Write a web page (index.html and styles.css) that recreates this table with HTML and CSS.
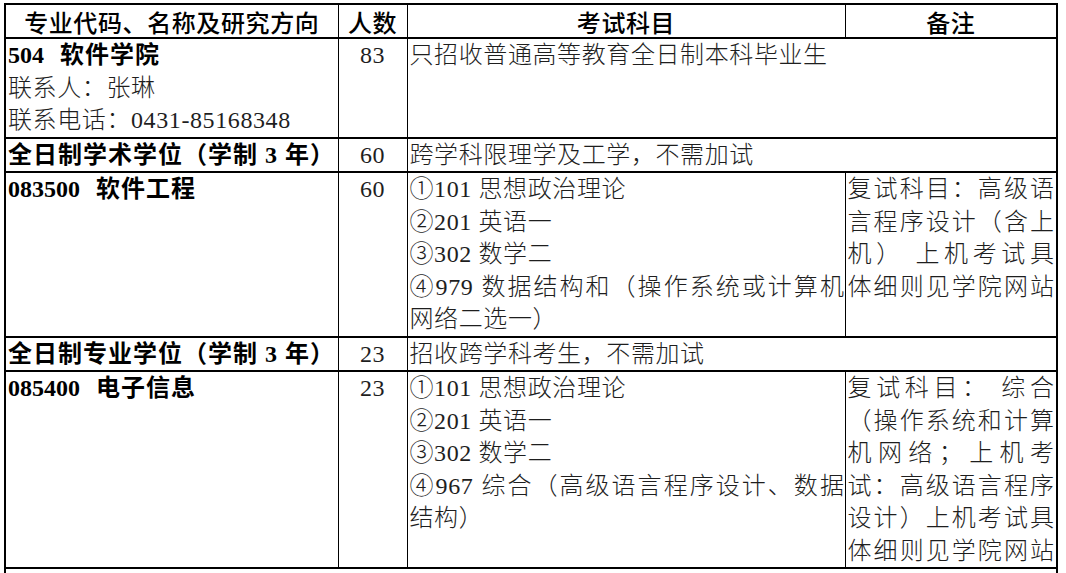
FILE: index.html
```html
<!DOCTYPE html>
<html lang="zh-CN">
<head>
<meta charset="utf-8">
<title>招生专业目录</title>
<link rel="stylesheet" href="styles.css">
</head>
<body>
<table class="catalog">
  <colgroup>
    <col class="c-major">
    <col class="c-num">
    <col class="c-exam">
    <col class="c-note">
  </colgroup>
  <thead>
    <tr class="head">
      <th>专业代码、名称及研究方向</th>
      <th>人数</th>
      <th>考试科目</th>
      <th>备注</th>
    </tr>
  </thead>
  <tbody>
    <tr>
      <td class="major">
        <div class="strong"><span class="code">504</span> 软件学院</div>
        <div>联系人：张琳</div>
        <div>联系电话：0431-85168348</div>
      </td>
      <td class="num">83</td>
      <td class="exam" colspan="2">只招收普通高等教育全日制本科毕业生</td>
    </tr>
    <tr>
      <td class="major strong">全日制学术学位（学制 3 年）</td>
      <td class="num">60</td>
      <td class="exam" colspan="2">跨学科限理学及工学，不需加试</td>
    </tr>
    <tr>
      <td class="major strong"><span class="code">083500</span> 软件工程</td>
      <td class="num">60</td>
      <td class="exam">
        <div>①101 思想政治理论</div>
        <div>②201 英语一</div>
        <div>③302 数学二</div>
        <div class="jl">④979 数据结构和（操作系统或计算机</div>
        <div>网络二选一）</div>
      </td>
      <td class="note">
        <div class="jl">复试科目：高级语</div>
        <div class="jl">言程序设计（含上</div>
        <div class="jl">机）&nbsp;上机考试具</div>
        <div class="jl">体细则见学院网站</div>
      </td>
    </tr>
    <tr>
      <td class="major strong">全日制专业学位（学制 3 年）</td>
      <td class="num">23</td>
      <td class="exam" colspan="2">招收跨学科考生，不需加试</td>
    </tr>
    <tr>
      <td class="major strong"><span class="code">085400</span> 电子信息</td>
      <td class="num">23</td>
      <td class="exam">
        <div>①101 思想政治理论</div>
        <div>②201 英语一</div>
        <div>③302 数学二</div>
        <div class="jl">④967 综合（高级语言程序设计、数据</div>
        <div>结构）</div>
      </td>
      <td class="note">
        <div class="jl">复试科目：&nbsp;综合</div>
        <div class="jl">（操作系统和计算</div>
        <div class="jl">机网络；上机考</div>
        <div class="jl">试：高级语言程序</div>
        <div class="jl">设计）上机考试具</div>
        <div class="jl">体细则见学院网站</div>
      </td>
    </tr>
    <tr class="tail">
      <td colspan="4"></td>
    </tr>
  </tbody>
</table>
</body>
</html>
```

FILE: styles.css
```css
html, body {
  margin: 0;
  padding: 0;
  background: #ffffff;
}

body {
  padding: 3px 0 0 4px;
  font-family: "Liberation Serif", "Noto Sans CJK SC", serif;
  color: #1e1e1e;
}

.catalog {
  border-collapse: collapse;
  table-layout: fixed;
  width: 1052px;
  border: 2px solid #000;
}

.c-major { width: 333px; }
.c-num { width: 69px; }
.c-exam { width: 438px; }
.c-note { width: 212px; }

.catalog th,
.catalog td {
  border-top: 2px solid #000;
  border-bottom: 2px solid #000;
  border-left: 1px solid #000;
  border-right: 1px solid #000;
  padding: 0 2px;
  vertical-align: top;
  text-align: left;
  font-size: 24px;
  line-height: 32.5px;
  font-weight: 300;
  letter-spacing: 0.6px;
  white-space: nowrap;
}

.head th {
  font-family: "Noto Sans CJK SC", sans-serif;
  font-weight: 500;
  color: #000;
  text-align: center;
  line-height: 31px;
  padding-top: 1px;
  letter-spacing: 0.6px;
}

.catalog td.num {
  text-align: center;
}

.strong {
  font-weight: 700;
  color: #000;
  letter-spacing: 1px;
}

.catalog td.strong {
  font-weight: 700;
  letter-spacing: 1px;
}

.code {
  letter-spacing: 0;
  margin-right: 9px;
}

.catalog td.major {
  padding-left: 2px;
}

.catalog td.exam {
  padding-right: 0;
}

.catalog td.note {
  padding: 0 2px 0 2px;
  letter-spacing: 0;
}

.jl {
  text-align: justify;
  text-align-last: justify;
  white-space: normal;
}

.tail td {
  height: 12px;
  border-bottom: none;
  padding: 0;
}
```
